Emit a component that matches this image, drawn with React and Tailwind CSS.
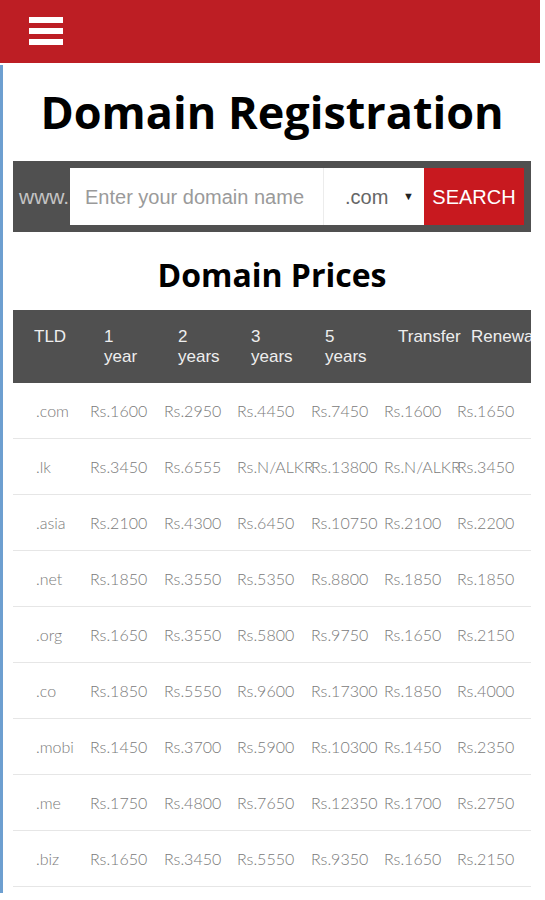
import React from "react";

const rows = [
  [".com", "Rs.1600", "Rs.2950", "Rs.4450", "Rs.7450", "Rs.1600", "Rs.1650"],
  [".lk", "Rs.3450", "Rs.6555", "Rs.N/ALKR", "Rs.13800", "Rs.N/ALKR", "Rs.3450"],
  [".asia", "Rs.2100", "Rs.4300", "Rs.6450", "Rs.10750", "Rs.2100", "Rs.2200"],
  [".net", "Rs.1850", "Rs.3550", "Rs.5350", "Rs.8800", "Rs.1850", "Rs.1850"],
  [".org", "Rs.1650", "Rs.3550", "Rs.5800", "Rs.9750", "Rs.1650", "Rs.2150"],
  [".co", "Rs.1850", "Rs.5550", "Rs.9600", "Rs.17300", "Rs.1850", "Rs.4000"],
  [".mobi", "Rs.1450", "Rs.3700", "Rs.5900", "Rs.10300", "Rs.1450", "Rs.2350"],
  [".me", "Rs.1750", "Rs.4800", "Rs.7650", "Rs.12350", "Rs.1700", "Rs.2750"],
  [".biz", "Rs.1650", "Rs.3450", "Rs.5550", "Rs.9350", "Rs.1650", "Rs.2150"],
];

const heads = [
  ["TLD"],
  ["1", "year"],
  ["2", "years"],
  ["3", "years"],
  ["5", "years"],
  ["Transfer"],
  ["Renewal"],
];

const grid = "grid grid-cols-[71px_74px_73px_74px_73px_73px_80px]";

export default function App() {
  return (
    <div className="w-[545px] min-h-[900px] bg-white flex">
      <div className="w-[540px] flex flex-col">
        <header className="h-[63px] bg-[#bd1e24] flex items-center pl-[29px]">
          <div className="flex flex-col gap-[5px] mt-[-2px]">
            <span className="block w-[34px] h-[6px] bg-white" />
            <span className="block w-[34px] h-[6px] bg-white" />
            <span className="block w-[34px] h-[6px] bg-white" />
          </div>
        </header>
        <main className="mt-[2px] border-l-[3px] border-[#6d9fd0] pl-[10px] pr-[9px] pb-[6px]">
          <h1 className="mt-[17px] mb-[19px] text-center text-[45px] leading-[60px] font-bold text-black font-['Open_Sans',sans-serif] whitespace-nowrap">
            Domain Registration
          </h1>
          <div className="h-[71px] bg-[#505050] flex items-center pr-[7px] font-['Liberation_Sans',Arial,sans-serif] text-[20px]">
            <div className="w-[57px] overflow-hidden whitespace-nowrap pl-[6px] text-[21px] text-[#c4c4c4]">www.</div>
            <div className="flex-1 h-[57px] bg-white flex items-center pl-[15px] text-[#9a9a9a]">
              Enter your domain name
            </div>
            <div className="w-[101px] h-[57px] bg-white border-l border-[#ececec] flex items-center pl-[21px] pr-[10px] text-[#666]">
              <span>.com</span>
              <span className="ml-auto text-[11px] text-[#222]">▼</span>
            </div>
            <div className="w-[100px] h-[57px] bg-[#c8191f] flex items-center justify-center text-white">
              SEARCH
            </div>
          </div>
          <h2 className="mt-[22px] mb-[14px] text-center text-[32px] leading-[42px] font-bold text-black font-['Open_Sans',sans-serif]">
            Domain Prices
          </h2>
          <div className="overflow-hidden">
            <div className={`${grid} h-[73px] bg-[#505050] text-[#eeeeee] text-[17px] leading-[20px] font-['Liberation_Sans',Arial,sans-serif]`}>
              {heads.map((h, i) => (
                <div key={i} className={`${i === 0 ? "pl-[21px]" : "pl-[20px]"} pt-[17px] whitespace-nowrap`}>
                  {h.map((l, j) => (
                    <div key={j}>{l}</div>
                  ))}
                </div>
              ))}
            </div>
            {rows.map((r, i) => (
              <div key={i} className={`${grid} h-[56px] border-b border-[#e6e6e6] items-center text-[16px] text-[#7a7a7a] font-light font-['Lato',sans-serif]`}>
                {r.map((c, j) => (
                  <div key={j} className={`${j === 0 ? "pl-[23px]" : "pl-[6px]"} whitespace-nowrap`}>
                    {c}
                  </div>
                ))}
              </div>
            ))}
          </div>
        </main>
      </div>
    </div>
  );
}
